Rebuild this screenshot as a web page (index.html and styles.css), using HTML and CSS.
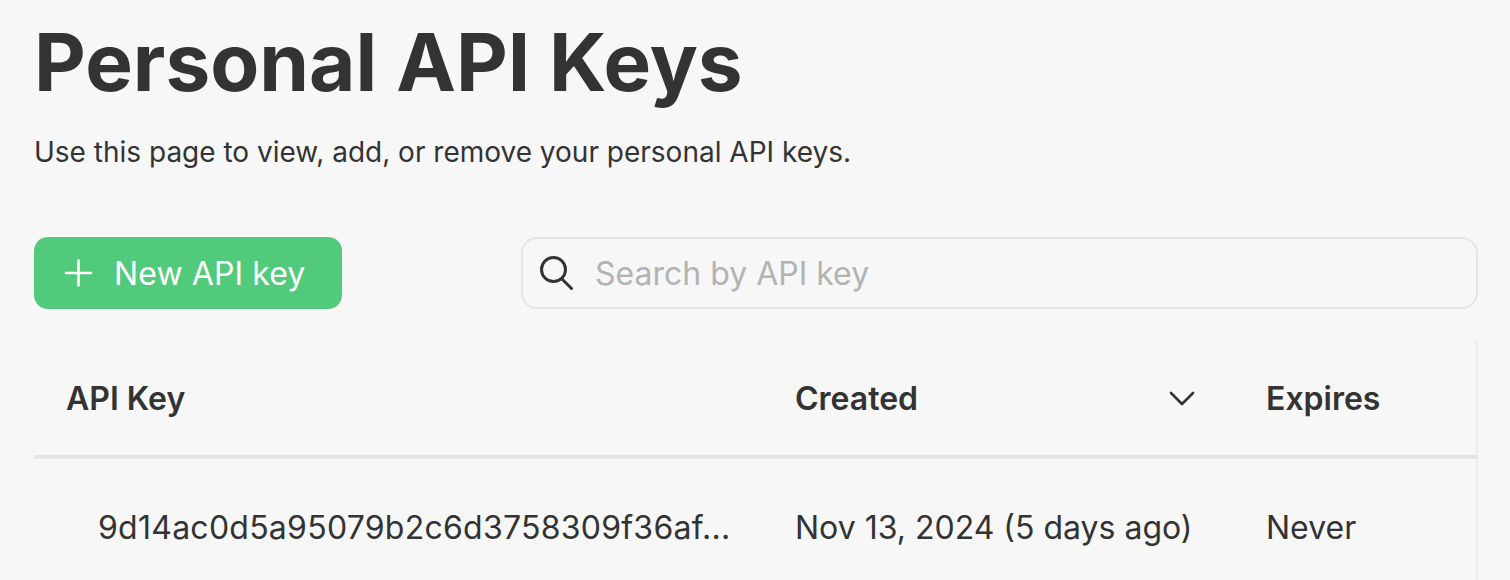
FILE: index.html
```html
<!DOCTYPE html>
<html lang="en">

<head>
    <meta charset="UTF-8">

    <title>Personal API Keys</title>
    <link rel="stylesheet" href="styles.css">
</head>

<body>

    <div class="page">
        <h1 class="title">Personal API Keys</h1>
        <p class="subtitle">Use this page to view, add, or remove your personal API keys.</p>

        <div class="toolbar">
            <button class="btn-new" type="button">
                <svg class="icon-plus" width="30" height="30" viewBox="0 0 30 30" fill="none" stroke="currentColor" stroke-width="2.6" stroke-linecap="round">
                    <path d="M15.5 2.5V27.5M3 15H28" />
                </svg>
                New API key
            </button>
            <div class="search">
                <svg class="icon-search" width="36" height="36" viewBox="0 0 36 36" fill="none" stroke="#333" stroke-width="3" stroke-linecap="round">
                    <circle cx="15.5" cy="14.5" r="12" />
                    <path d="M24 24L33.5 33.5" />
                </svg>
                <span class="search-placeholder">Search by API key</span>
            </div>
        </div>

        <table class="keys">
            <colgroup>
                <col class="col-key">
                <col class="col-created">
                <col>
            </colgroup>
            <thead>
                <tr>
                    <th>API Key</th>
                    <th>
                        <div class="sortable">
                            Created
                            <svg width="26" height="16" viewBox="0 0 26 16" fill="none" stroke="#333" stroke-width="2.6" stroke-linecap="round" stroke-linejoin="round">
                                <path d="M2 3L13 14L24 3" />
                            </svg>
                        </div>
                    </th>
                    <th>Expires</th>
                </tr>
            </thead>
            <tbody>
                <tr>
                    <td class="key-value">9d14ac0d5a95079b2c6d3758309f36af...</td>
                    <td>Nov 13, 2024 (5 days ago)</td>
                    <td>Never</td>
                </tr>
            </tbody>
        </table>
    </div>

</body>

</html>
```

FILE: styles.css
```css
* {
    margin: 0;
    padding: 0;
    box-sizing: border-box;
}

html,
body {
    height: 580px;
    overflow: hidden;
}

body {
    background-color: #f7f7f7;
    color: #333;
    font-family: Inter, "Liberation Sans", sans-serif;
}

.page {
    width: 1444px;
    margin-left: 34px;
}

.title {
    font-size: 80px;
    font-weight: 700;
    line-height: 86px;
    margin-top: 19px;
}

.subtitle {
    font-size: 28px;
    line-height: 40px;
    margin-top: 27px;
}

.toolbar {
    display: flex;
    align-items: stretch;
    justify-content: space-between;
    margin-top: 65px;
    height: 72px;
}

.btn-new {
    display: flex;
    align-items: center;
    gap: 21px;
    width: 308px;
    padding-left: 29px;
    border: none;
    border-radius: 14px;
    background-color: #52ca7c;
    color: #fff;
    font-family: inherit;
    font-size: 32px;
    font-weight: 400;
    letter-spacing: 0.1px;
}

.search {
    display: flex;
    align-items: center;
    gap: 21px;
    width: 957px;
    padding-left: 15px;
    border: 2px solid #e5e5e5;
    border-radius: 16px;
}

.search-placeholder {
    color: #b3b3b3;
    font-size: 32px;
}

.keys {
    width: 1444px;
    margin-top: 31px;
    border-collapse: collapse;
    table-layout: fixed;
    box-shadow: inset -3px 0 3px -1px #ececec;
    font-size: 32px;
}

.col-key {
    width: 729px;
}

.col-created {
    width: 471px;
}

th {
    height: 117px;
    padding: 1px 32px 0;
    border-bottom: 4px solid #e5e5e5;
    font-weight: 600;
    text-align: left;
}

td {
    height: 138px;
    padding: 0 32px;
}

td.key-value {
    padding-left: 64px;
    white-space: nowrap;
    letter-spacing: 0.25px;
}

.sortable {
    display: flex;
    align-items: center;
    justify-content: space-between;
    padding-right: 7px;
}
```
